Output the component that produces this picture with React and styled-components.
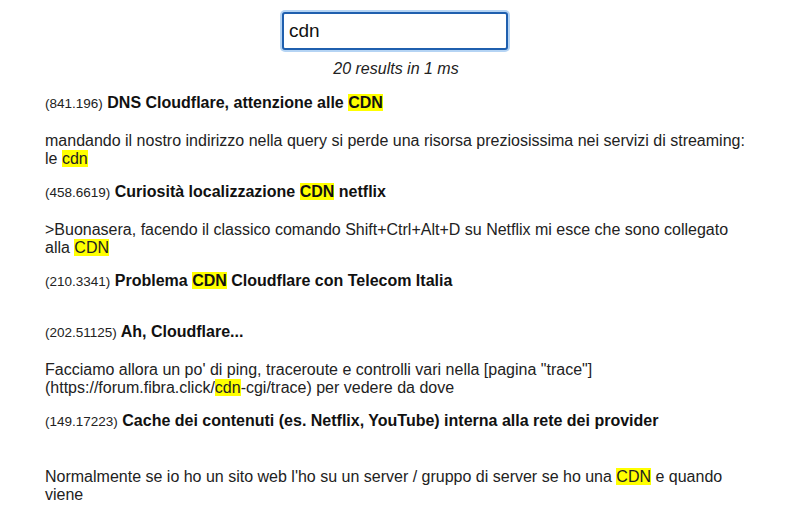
import React from "react";
import styled, { createGlobalStyle } from "styled-components";

const Global = createGlobalStyle`
  html, body { margin: 0; padding: 0; background: #fff; }
  body { font-family: "Liberation Sans", Arial, sans-serif; color: #222; }
`;

const Page = styled.div`
  display: flex;
  flex-direction: column;
  align-items: center;
  padding-top: 12px;
`;

const SearchBox = styled.input`
  box-sizing: border-box;
  width: 226px;
  height: 38px;
  margin-right: 2px;
  border: 2px solid #1f5fae;
  border-radius: 3px;
  box-shadow: 0 0 0 2px #b5d4f4;
  outline: none;
  padding: 0 5px;
  font-family: "Liberation Sans", Arial, sans-serif;
  font-size: 19px;
  color: #111;
  caret-color: #111;
`;

const Status = styled.div`
  margin-top: 11px;
  font-size: 16px;
  line-height: 16px;
  font-style: italic;
  color: #222;
`;

const List = styled.div`
  width: 702px;
  margin-top: 17px;
  display: flex;
  flex-direction: column;
`;

const Item = styled.div`
  margin-bottom: 15px;
`;

const Title = styled.div`
  font-size: 16px;
  line-height: 18px;
  font-weight: bold;
  color: #111;
`;

const Score = styled.span`
  font-size: 13.5px;
  font-weight: normal;
  color: #222;
`;

const Body = styled.div`
  margin-top: ${(p) => (p.$empty ? "17px" : "19px")};
  font-size: 16px;
  line-height: 18px;
  white-space: pre-line;
  color: #222;
`;

const Mark = styled.mark`
  background: #ffff00;
  color: inherit;
  padding: 0;
`;

const results = [
  {
    score: "841.196",
    title: ["DNS Cloudflare, attenzione alle ", { m: "CDN" }],
    body: [
      "mandando il nostro indirizzo nella query si perde una risorsa preziosissima nei servizi di streaming: le ",
      { m: "cdn" },
    ],
  },
  {
    score: "458.6619",
    title: ["Curiosità localizzazione ", { m: "CDN" }, " netflix"],
    body: [
      ">Buonasera, facendo il classico comando Shift+Ctrl+Alt+D su Netflix mi esce che sono collegato alla ",
      { m: "CDN" },
    ],
  },
  {
    score: "210.3341",
    title: ["Problema ", { m: "CDN" }, " Cloudflare con Telecom Italia"],
    body: [],
  },
  {
    score: "202.51125",
    title: ["Ah, Cloudflare..."],
    body: [
      "Facciamo allora un po' di ping, traceroute e controlli vari nella [pagina \"trace\"](https://forum.fibra.click/",
      { m: "cdn" },
      "-cgi/trace) per vedere da dove",
    ],
  },
  {
    score: "149.17223",
    title: ["Cache dei contenuti (es. Netflix, YouTube) interna alla rete dei provider"],
    body: [
      "\nNormalmente se io ho un sito web l'ho su un server / gruppo di server se ho una ",
      { m: "CDN" },
      " e quando viene",
    ],
  },
];

const renderSegs = (segs) =>
  segs.map((s, i) =>
    typeof s === "string" ? <React.Fragment key={i}>{s}</React.Fragment> : <Mark key={i}>{s.m}</Mark>
  );

export default function App() {
  return (
    <>
      <Global />
      <Page>
        <SearchBox defaultValue="cdn" autoFocus />
        <Status>20 results in 1 ms</Status>
        <List>
          {results.map((r, i) => (
            <Item key={i}>
              <Title>
                <Score>({r.score})</Score> {renderSegs(r.title)}
              </Title>
              <Body $empty={r.body.length === 0}>{renderSegs(r.body)}</Body>
            </Item>
          ))}
        </List>
      </Page>
    </>
  );
}
